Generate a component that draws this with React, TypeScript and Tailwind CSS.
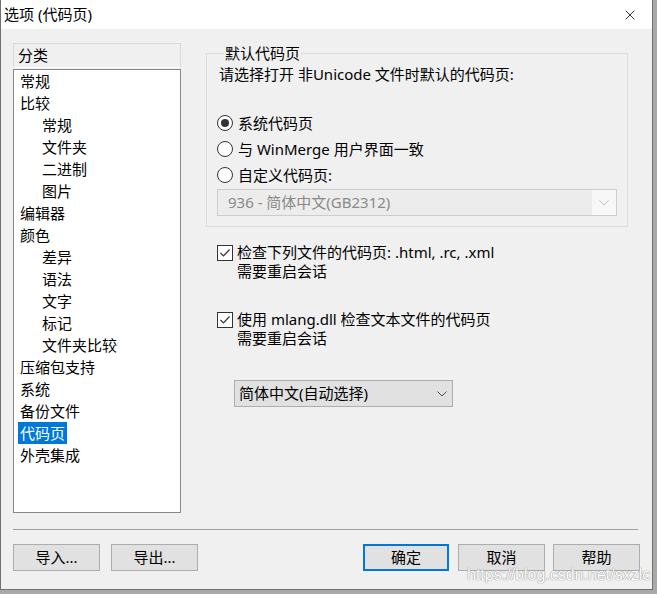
import { X } from "lucide-react"

const categories: { label: string; sub?: boolean; selected?: boolean }[] = [
  { label: "常规" },
  { label: "比较" },
  { label: "常规", sub: true },
  { label: "文件夹", sub: true },
  { label: "二进制", sub: true },
  { label: "图片", sub: true },
  { label: "编辑器" },
  { label: "颜色" },
  { label: "差异", sub: true },
  { label: "语法", sub: true },
  { label: "文字", sub: true },
  { label: "标记", sub: true },
  { label: "文件夹比较", sub: true },
  { label: "压缩包支持" },
  { label: "系统" },
  { label: "备份文件" },
  { label: "代码页", selected: true },
  { label: "外壳集成" },
]

function Chevron({ disabled }: { disabled?: boolean }) {
  return (
    <svg width="10" height="6" viewBox="0 0 10 6" fill="none">
      <path
        d="M0.5 0.5 L5 5 L9.5 0.5"
        stroke={disabled ? "#bdbdbd" : "#505050"}
        strokeWidth="1"
      />
    </svg>
  )
}

function Radio({ checked, label }: { checked?: boolean; label: string }) {
  return (
    <div className="flex h-[26px] items-center">
      <span className="flex h-[16px] w-[16px] items-center justify-center rounded-full border border-[#333333] bg-white">
        {checked && <span className="h-[8px] w-[8px] rounded-full bg-[#333333]" />}
      </span>
      <span className="ml-[5px]">{label}</span>
    </div>
  )
}

function Check({ label }: { label: string }) {
  return (
    <div className="flex">
      <span className="mt-[2px] flex h-[16px] w-[16px] shrink-0 items-center justify-center border border-[#333333] bg-white">
        <svg width="14" height="14" viewBox="0 0 14 14" fill="none">
          <path d="M2.5 7 L5.5 10 L11.5 3.5" stroke="#333333" strokeWidth="1.2" />
        </svg>
      </span>
      <div className="ml-[4px] leading-[19px]">
        <div>{label}</div>
        <div>需要重启会话</div>
      </div>
    </div>
  )
}

function Button({ label, primary }: { label: string; primary?: boolean }) {
  return (
    <button
      className={
        primary
          ? "flex h-[27px] w-[86px] items-center justify-center border-2 border-[#0078d7] bg-[#e1e1e1] text-[15px]"
          : "flex h-[27px] w-[87px] items-center justify-center border border-[#adadad] bg-[#e1e1e1] text-[15px]"
      }
    >
      {label}
    </button>
  )
}

export default function App() {
  return (
    <div
      className="relative h-[594px] w-[657px] overflow-hidden bg-[#a9a9a9] text-[15px] text-black"
      style={{ fontFamily: '"Noto Sans", "Noto Sans CJK SC", sans-serif' }}
    >
      <div className="flex h-[590px] w-[653px] flex-col border-x border-b border-[#707070] bg-[#f0f0f0]">
        {/* Title bar */}
        <div className="flex h-[29px] shrink-0 items-center justify-between bg-white pl-[3px] pr-[14px]">
          <span className="leading-[19px]">选项 (代码页)</span>
          <X className="h-[16px] w-[16px]" strokeWidth={1.2} />
        </div>

        <div className="flex flex-1 flex-col pl-[12px]">
          <div className="mt-[14px] flex h-[470px]">
            {/* Categories */}
            <div className="flex w-[168px] flex-col">
              <div className="flex h-[25px] items-center border border-[#d9d9d9] border-b-white pl-[4px] leading-[19px]">
                分类
              </div>
              <div className="mt-[1px] h-[444px] border border-[#828790] bg-white">
                {categories.map((c, i) => (
                  <div key={i} className="flex h-[22px] items-center">
                    <span
                      className={
                        (c.sub ? "ml-[26px] " : "ml-[4px] ") +
                        (c.selected
                          ? "bg-[#0078d7] px-[2px] leading-[22px] text-white"
                          : "px-[2px] leading-[22px]")
                      }
                    >
                      {c.label}
                    </span>
                  </div>
                ))}
              </div>
            </div>

            {/* Right side */}
            <div className="ml-[25px] flex w-[422px] flex-col">
              <fieldset className="mt-[1px] border border-[#dcdcdc] px-[10px] pb-[10px]">
                <legend className="ml-[7px] px-[1px] leading-[19px]">默认代码页</legend>
                <div className="mt-[2px] pl-[2px] leading-[19px]">
                  请选择打开 非Unicode 文件时默认的代码页:
                </div>
                <div className="mt-[26px]">
                  <Radio checked label="系统代码页" />
                  <Radio label="与 WinMerge 用户界面一致" />
                  <Radio label="自定义代码页:" />
                </div>
                <div className="mt-[1px] flex h-[27px] items-stretch border border-[#cccccc] bg-[#ececec]">
                  <span className="flex flex-1 items-center pl-[10px] text-[#8a8a8a]">
                    936 - 简体中文(GB2312)
                  </span>
                  <span className="flex w-[24px] items-center justify-center bg-[#f7f7f7]">
                    <Chevron disabled />
                  </span>
                </div>
              </fieldset>

              <div className="mt-[16px] pl-[11px]">
                <Check label="检查下列文件的代码页: .html, .rc, .xml" />
              </div>
              <div className="mt-[29px] pl-[11px]">
                <Check label="使用 mlang.dll 检查文本文件的代码页" />
              </div>
              <div className="ml-[28px] mt-[32px] flex h-[27px] w-[219px] items-center justify-between border border-[#adadad] bg-[#e1e1e1] pl-[4px] pr-[5px]">
                <span className="leading-[19px]">简体中文(自动选择)</span>
                <Chevron />
              </div>
            </div>
          </div>

          {/* Separator */}
          <div className="mt-[16px] h-px w-[625px] bg-[#a0a0a0]" />

          {/* Buttons */}
          <div className="mt-[14px] flex w-[627px] items-center">
            <div className="flex gap-[11px]">
              <Button label="导入..." />
              <Button label="导出..." />
            </div>
            <div className="ml-auto flex">
              <Button label="确定" primary />
              <div className="ml-[9px]">
                <Button label="取消" />
              </div>
              <div className="ml-[8px]">
                <Button label="帮助" />
              </div>
            </div>
          </div>
        </div>
      </div>

      {/* Watermark */}
      <div
        className="absolute left-[467px] top-[566px] text-[16px] leading-[18px] text-white [text-shadow:0_0_1px_#8a8a8a,0_0_1px_#8a8a8a]"
        style={{ fontFamily: '"Liberation Sans", sans-serif' }}
      >
        https://blog.csdn.net/sxzlc
      </div>
    </div>
  )
}
